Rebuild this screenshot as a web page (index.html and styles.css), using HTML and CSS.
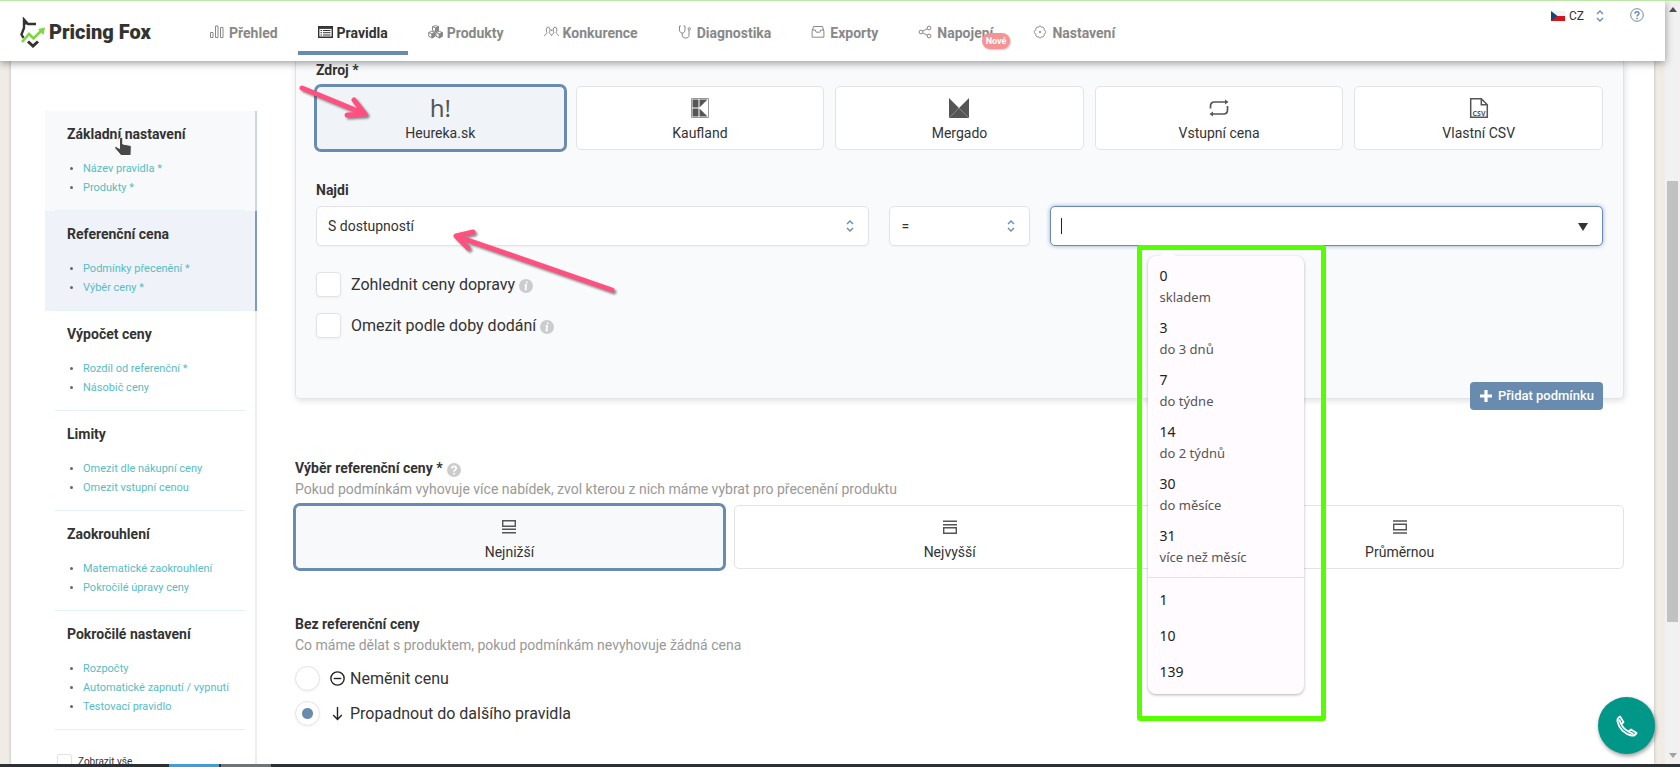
FILE: index.html
```html
<!DOCTYPE html>
<html lang="cs">
<head>
<meta charset="utf-8">
<title>Pricing Fox</title>
<link rel="stylesheet" href="styles.css">
</head>
<body>
<div class="window">
  <div class="app">
    <header class="header">
      <a class="logo" href="#">
        <svg class="logo-mark" viewBox="0 0 26 31" fill="none">
          <path d="M16 7H8L4 2.500V11L1.500 17.500L3.500 21" stroke="#333" stroke-width="2.400"/>
          <path d="M4 2V8L8 7Z" fill="#333"/>
          <path d="M8 24.500L13 29L18 24.500" stroke="#333" stroke-width="3"/>
          <path d="M2 25L9 17L13.500 21.500L22 13" stroke="#7ed63f" stroke-width="2.600"/>
          <path d="M18 12L25 10.500L23.500 18Z" fill="#7ed63f"/>
        </svg>
        <span>Pricing Fox</span>
      </a>
      <nav class="nav">
        <a class="nav-item" href="#"><svg class="nav-icon" viewBox="0 0 15 14"><path d="M.5 7.500h2.500v5H.5zM5.500 1h2.500v11.500H5.500zM10.500 2.500H13v10h-2.500z"/></svg>Přehled</a>
        <a class="nav-item active" href="#"><svg class="nav-icon" viewBox="0 0 15 14"><path d="M.7 1.700h13.600v10.600H.7z" stroke-width="1.400"/><path d="M1 3h13" stroke-width="1.800"/><path d="M2.500 5.500h1.500M5 5.500h7.500M2.500 7.700h1.500M5 7.700h7.500M2.500 10h1.500M5 10h7.500"/></svg>Pravidla</a>
        <a class="nav-item" href="#"><svg class="nav-icon" viewBox="0 0 15 14"><path d="M4.500 1.700L7.500.6l3 1.100v3.600L7.500 6.700l-3-1.400zM4.500 1.700l3 1.300 3-1.300M7.500 3v3.500M.7 7.500l3-1.200 3.300 1.200v3.700L4 12.900l-3.300-1.700zM.7 7.500L4 9l3-1.500M4 9v4M8 7.500l3.300-1.200 3 1.200v3.700l-3 1.700L8 11.200zM8 7.500L11.300 9l3-1.500M11.300 9v4"/><path d="M4 9l3-1.500v3.700L4 13zM11.300 9l3-1.500v3.700l-3 1.800zM7.500 3l3-1.300v3.600l-3 1.400z" fill="currentColor"/></svg>Produkty</a>
        <a class="nav-item" href="#"><svg class="nav-icon" viewBox="0 0 15 14"><path d="M.6 11C.8 9 3 9 3 7.500 2 6.500 1.900 2 4.200 2S6.300 6.500 5.300 7.500c0 1.500 2.300 1.400 2.300 3 0-1.600 2.300-1.500 2.300-3-1-1-1.100-5.500 1.100-5.500s2.200 4.500 1.200 5.500c0 1.500 2.200 1.500 2.300 3.500M7 4.500l.6 1.500.6-1.500"/></svg>Konkurence</a>
        <a class="nav-item" href="#"><svg class="nav-icon narrow" viewBox="0 0 13 14"><path d="M2.500 1H1v4c0 4 5.500 4 5.500 0V1H5M3.700 8v2c0 4 6.800 4 6.800.5V5"/><circle cx="10.800" cy="3.800" r="1.200"/></svg>Diagnostika</a>
        <a class="nav-item" href="#"><svg class="nav-icon narrow" viewBox="0 0 13 14"><path d="M.6 6.500L2 1.500h9l1.400 5v5.700H.6zM.6 5h3.200l.9 2.200h3.600L9.200 5h3.200"/></svg>Exporty</a>
        <a class="nav-item" href="#"><svg class="nav-icon narrow" viewBox="0 0 13 14"><circle cx="2.500" cy="7" r="1.900"/><circle cx="10.500" cy="3" r="1.900"/><circle cx="10.500" cy="11" r="1.900"/><path d="M4.200 6.100l4.600-2.300M4.200 7.900l4.600 2.300"/></svg>Napojení<span class="badge">Nové</span></a>
        <a class="nav-item" href="#"><svg class="nav-icon narrow" viewBox="0 0 13 14"><path d="M5 2.300C5.500.4 7.500.4 8 2.300c1.800-.8 3.300.7 2.500 2.500 2.300 1 2.300 3.400 0 4.400.8 1.800-.7 3.300-2.500 2.500-.5 1.900-2.500 1.900-3 0-1.800.8-3.300-.7-2.500-2.500C.2 8.200.2 5.800 2.500 4.800 1.700 3 3.200 1.500 5 2.300z"/><circle cx="6.500" cy="7" r="1.100" fill="currentColor" stroke="none"/></svg>Nastavení</a>
      </nav>
      <div class="tools">
        <div class="lang">
          <svg class="flag" viewBox="0 0 14 10"><path fill="#f3f3f3" d="M0 0h14v5H0z"/><path fill="#d7141a" d="M0 5h14v5H0z"/><path fill="#11457e" d="M0 0l6.500 5L0 10z"/></svg>
          <select class="lang-select" aria-label="Jazyk"><option>CZ</option></select>
          <svg class="updown" viewBox="0 0 8 12"><path d="M1 4L4 1 7 4M1 8L4 11 7 8"/></svg>
        </div>
        <button class="help" aria-label="Nápověda"><svg viewBox="0 0 14 14"><circle cx="7" cy="7" r="6.300"/><path d="M5 5.700c0-2.600 4-2.500 4-.2C9 7 7 6.900 7 8.500M7 9.700v1.500" stroke-width="1.500"/></svg></button>
      </div>
    </header>

    <div class="stage">
      <div class="sheet">
        <aside class="side">
          <ul class="steps">
            <li class="step seen"><h3>Základní nastavení
              <svg class="pointer" viewBox="0 0 20 21"><path d="M7.500 1.500c1-.7 2.300 0 2.300 1.200V8l7 1.300c1.300.4 1.700 1.300 1.500 2.500L18 19.500H8L2 12.500c-.8-1.300.6-2.300 1.700-1.700l2.800 1.700V2.700c0-.5.500-1 1-1.200z" fill="#484848" stroke="#fff"/></svg></h3>
              <ul class="links"><li><a href="#">Název pravidla *</a></li><li><a href="#">Produkty *</a></li></ul></li>
            <li class="step current"><h3>Referenční cena</h3>
              <ul class="links"><li><a href="#">Podmínky přecenění *</a></li><li><a href="#">Výběr ceny *</a></li></ul></li>
            <li class="step"><h3>Výpočet ceny</h3>
              <ul class="links"><li><a href="#">Rozdíl od referenční *</a></li><li><a href="#">Násobič ceny</a></li></ul></li>
            <li class="step"><h3>Limity</h3>
              <ul class="links"><li><a href="#">Omezit dle nákupní ceny</a></li><li><a href="#">Omezit vstupní cenou</a></li></ul></li>
            <li class="step"><h3>Zaokrouhlení</h3>
              <ul class="links"><li><a href="#">Matematické zaokrouhlení</a></li><li><a href="#">Pokročilé úpravy ceny</a></li></ul></li>
            <li class="step"><h3>Pokročilé nastavení</h3>
              <ul class="links"><li><a href="#">Rozpočty</a></li><li><a href="#">Automatické zapnutí / vypnutí</a></li><li><a href="#">Testovací pravidlo</a></li></ul></li>
          </ul>
          <label class="show-all"><input type="checkbox" class="check small">Zobrazit vše</label>
        </aside>

        <main class="main">
          <section class="panel">
            <h4 class="label">Zdroj *</h4>
            <div class="sources">
              <button class="card selected"><span class="glyph">h!</span>Heureka.sk</button>
              <button class="card"><svg class="card-icon" viewBox="0 0 20 20"><path d="M1.500.5h17v19h-17z" fill="#fff" stroke="#999"/><path d="M2.500 1.500h6v8h-6zM2.500 10.500h6v8h-6zM9.500 1.500h8l-8 8zM9.500 10.500l8 8h-8z" fill="#555"/></svg>Kaufland</button>
              <button class="card"><svg class="card-icon" viewBox="0 0 20 20"><path d="M0 0l10 10L20 0v20H0z" fill="#555"/><path d="M10 10L0 20M10 10l10 10" stroke="#999" stroke-width=".7"/></svg>Mergado</button>
              <button class="card"><svg class="card-icon" viewBox="0 0 20 20" fill="none" stroke="#555" stroke-width="1.700"><path d="M1.500 10.500V8c0-2.500 1.500-4 4-4H17M18.500 8v4c0 2.500-1.500 4-4 4H3"/><path d="M16 1.500L19.500 4 16 6.500zM4 13.500L.5 16 4 18.500z" fill="#555" stroke="none"/></svg>Vstupní cena</button>
              <button class="card"><svg class="card-icon" viewBox="0 0 20 20"><path d="M1.700.7h10.600l6 6v12.600H1.700zM12.300.7v6h6" fill="none" stroke="#555" stroke-width="1.500"/><text x="10" y="17.500" text-anchor="middle" class="csv">CSV</text></svg>Vlastní CSV</button>
            </div>
            <h4 class="label find">Najdi</h4>
            <div class="filters">
              <div class="field"><select class="control" aria-label="Najdi"><option>S dostupností</option></select><svg class="updown" viewBox="0 0 8 12"><path d="M1 4L4 1 7 4M1 8L4 11 7 8"/></svg></div>
              <div class="field"><select class="control" aria-label="Operátor"><option>=</option></select><svg class="updown" viewBox="0 0 8 12"><path d="M1 4L4 1 7 4M1 8L4 11 7 8"/></svg></div>
              <div class="field focus">
                <input class="control" type="text" aria-label="Hodnota"><span class="caret"></span>
                <svg class="arrow" viewBox="0 0 10 8"><path d="M0 0h10L5 8z" fill="#333"/></svg>
                <div class="frame">
                  <div class="menu">
                    <ul>
                      <li>0<small>skladem</small></li>
                      <li>3<small>do 3 dnů</small></li>
                      <li>7<small>do týdne</small></li>
                      <li>14<small>do 2 týdnů</small></li>
                      <li>30<small>do měsíce</small></li>
                      <li>31<small>více než měsíc</small></li>
                    </ul>
                    <ul class="plain"><li>1</li><li>10</li><li>139</li></ul>
                  </div>
                </div>
              </div>
            </div>
            <div class="options">
              <label class="option"><input type="checkbox" class="check">Zohlednit ceny dopravy<svg class="hint" viewBox="0 0 14 14"><circle cx="7" cy="7" r="7" fill="#ccc"/><path d="M7.700 2.500v1.800M5.500 6h1.700l-.8 4.500h1.400" stroke="#fff" stroke-width="1.600" fill="none"/></svg></label>
              <label class="option"><input type="checkbox" class="check">Omezit podle doby dodání<svg class="hint" viewBox="0 0 14 14"><circle cx="7" cy="7" r="7" fill="#ccc"/><path d="M7.700 2.500v1.800M5.500 6h1.700l-.8 4.500h1.400" stroke="#fff" stroke-width="1.600" fill="none"/></svg></label>
            </div>
            <button class="add"><svg viewBox="0 0 12 12"><path d="M6 0v12M0 6h12" stroke="#fff" stroke-width="3.200"/></svg>Přidat podmínku</button>
            <svg class="marks" viewBox="0 0 340 230">
              <g><path d="M8 27L71 53M60 39L71 53L53 54"/><path d="M318 229L162 175M179 171L162 175L174 187"/></g>
            </svg>
          </section>

          <section class="block">
            <h4 class="label">Výběr referenční ceny *<svg class="hint" viewBox="0 0 14 14"><circle cx="7" cy="7" r="7" fill="#ccc"/><path d="M4.800 5.500c0-3 4.400-2.800 4.400-.2C9.200 7 7 6.900 7 8.700M7 9.800v1.700" stroke="#fff" stroke-width="1.700" fill="none"/></svg></h4>
            <p class="note">Pokud podmínkám vyhovuje více nabídek, zvol kterou z nich máme vybrat pro přecenění produktu</p>
            <div class="picks">
              <button class="card selected"><svg class="pick-icon" viewBox="0 0 14 14"><path d="M.7.700h12.600v5.600H.7zM0 9.300h14M0 12.700h14"/></svg>Nejnižší</button>
              <button class="card"><svg class="pick-icon" viewBox="0 0 14 14"><path d="M.7 7.700h12.600v5.600H.7zM0 1.300h14M0 4.700h14"/></svg>Nejvyšší</button>
              <button class="card"><svg class="pick-icon" viewBox="0 0 14 14"><path d="M.7 4.200h12.600v5.600H.7zM0 1h14M0 13h14"/></svg>Průměrnou</button>
            </div>
          </section>

          <section class="block fallback">
            <h4 class="label">Bez referenční ceny</h4>
            <p class="note">Co máme dělat s produktem, pokud podmínkám nevyhovuje žádná cena</p>
            <label class="choice"><input type="radio" name="fallback" class="radio"><svg class="choice-icon" viewBox="0 0 14 14"><circle cx="7" cy="7" r="6.200"/><path d="M3.500 7h7"/></svg>Neměnit cenu</label>
            <label class="choice"><input type="radio" name="fallback" class="radio" checked><svg class="choice-icon" viewBox="0 0 14 14"><path d="M7 1v11.500M3 8.500l4 4 4-4"/></svg>Propadnout do dalšího pravidla</label>
          </section>
        </main>
      </div>
      <button class="call" aria-label="Zavolat"><svg viewBox="0 0 22 22"><path d="M4 1.500l3.500 5.500-2.200 2.200c1.500 3.300 4.200 6 7.500 7.500l2.200-2.200 5.500 3.500c-1 2-2.700 3-5 2.500C8.500 19 3 13.500 1.500 6.500 1 4.200 2 2.500 4 1.500zM3 4.500l2.300 4.700M12.800 16.700l4.700 2.300"/></svg></button>
    </div>
  </div>
  <div class="scrollbar">
    <svg viewBox="0 0 8 5"><path d="M0 5h8L4 0z" fill="#505050"/></svg>
    <div class="track"><div class="thumb"></div></div>
    <svg viewBox="0 0 8 5"><path d="M0 0h8L4 5z" fill="#a3a3a3"/></svg>
  </div>
</div>
<div class="taskbar"><span class="task blue"></span><span class="task grey"></span></div>
</body>
</html>
```

FILE: styles.css
```css
* { box-sizing: border-box; }
body {
  margin: 0;
  height: 100vh;
  display: flex;
  flex-direction: column;
  overflow: hidden;
  font: 14px/20px Roboto, sans-serif;
  color: #333;
  background: #f0ece5;
  border-top: 1px solid #b9e8a4;
}
ul { list-style: none; margin: 0; padding: 0; }
h3, h4, p { margin: 0; }
button, input, select { font: inherit; color: inherit; margin: 0; }
a { text-decoration: none; }
svg { display: block; flex: none; }

.window { flex: 1; min-height: 0; display: flex; }
.app { flex: 1; min-width: 0; display: flex; flex-direction: column; }

.header {
  position: relative;
  z-index: 5;
  display: flex;
  height: 60px;
  padding: 0 20px;
  background: #fff;
  box-shadow: 0 2px 8px rgba(0, 0, 0, .4);
}
.logo {
  display: flex;
  align-items: center;
  gap: 3px;
  width: 170px;
  padding-top: 2px;
  color: #333;
  font-size: 20px;
  font-weight: 900;
}
.logo-mark { width: 26px; height: 31px; }
.nav { display: flex; }
.nav-item {
  position: relative;
  display: flex;
  align-items: center;
  gap: 4px;
  height: 54px;
  padding: 13px 20px 0;
  color: #888;
  font-weight: 700;
  border-bottom: 4px solid transparent;
}
.nav-item.active { color: #333; border-color: #6a8bb0; }
.nav-icon { width: 15px; height: 14px; margin-bottom: 2px; fill: none; stroke: currentColor; }
.nav-icon.narrow { width: 14px; margin-right: 1px; }
.badge {
  position: absolute;
  right: 3px;
  top: 32px;
  padding: 0 4px;
  border-radius: 8px;
  background: #f59494;
  color: #fff;
  font-size: 9px;
  line-height: 16px;
  box-shadow: 1px 1px 2px rgba(0, 0, 0, .2);
}
.tools { display: flex; align-items: flex-start; gap: 26px; margin-left: auto; padding: 7px 1px 0 0; }
.lang { display: flex; align-items: center; gap: 4px; height: 16px; }
.flag { width: 14px; height: 10px; }
.lang-select { appearance: none; border: 0; background: none; padding: 0; width: 23px; font-size: 12px; }
.updown { width: 8px; height: 12px; fill: none; stroke: #6a8bb0; stroke-width: 1.4; }
.help { padding: 0; border: 0; background: none; }
.help svg { width: 14px; height: 14px; fill: none; stroke: #6a8bb0; }

.stage { position: relative; flex: 1; min-height: 0; padding: 0 11px; overflow: hidden; }
.sheet {
  display: flex;
  height: 100%;
  padding: 0 30px 0 34px;
  background: #fff;
  box-shadow: 0 0 3px rgba(0, 0, 50, .25);
}

.side { display: flex; flex-direction: column; width: 212px; padding-top: 50px; flex: none; }
.step {
  position: relative;
  padding: 13px 22px 14px;
  border-right: 2px solid #eee;
}
.step::after {
  content: "";
  position: absolute;
  left: 10px;
  right: 10px;
  bottom: 0;
  height: 1px;
  background: #e3f3f2;
}
.step.seen { background: #f8f9fb; border-color: #ccd7e4; }
.step.current { background: #eff2f8; border-color: #7f9bbd; }
.step h3 { position: relative; font-size: 14px; line-height: 20px; }
.links { padding: 15px 0 0 16px; list-style: disc; color: #666; font-size: 11px; line-height: 19px; }
.links li::marker { font-size: 10px; }
.links a { color: #56bdc3; white-space: nowrap; }
.pointer { position: absolute; left: 46px; top: 12px; width: 20px; height: 21px; }
.show-all {
  display: flex;
  flex: 1;
  align-items: flex-start;
  gap: 6px;
  padding: 24px 0 0 12px;
  border-right: 2px solid #eee;
  font-size: 10px;
  line-height: 16px;
}

.main { flex: 1; min-width: 0; margin-left: 38px; }
.panel {
  position: relative;
  height: 338px;
  padding: 0 20px;
  background: #f9fafc;
  border: 1px solid #e2e3e5;
  border-top: 0;
  border-radius: 0 0 5px 5px;
  box-shadow: 1px 2px 6px rgba(0, 0, 0, .12);
}
.label { display: flex; align-items: center; gap: 4px; font-size: 14px; line-height: 18px; }
.sources { display: grid; grid-template-columns: repeat(5, 1fr); gap: 11px; margin-top: 7px; }
.card {
  display: flex;
  flex-direction: column;
  align-items: center;
  justify-content: center;
  gap: 5px;
  height: 64px;
  padding: 5px 0 0;
  border: 1px solid #e2e3e5;
  border-radius: 5px;
  background: #fff;
}
.card.selected { background: #f8f9fb; border-color: #6a8bb0; box-shadow: 0 0 0 2px #6a8bb0; }
.sources .card.selected { background: #f0f4f9; }
.card-icon { width: 20px; height: 20px; }
.glyph { color: #555; font: 24px/20px "Noto Sans", sans-serif; }
.csv { font: bold 7px "Open Sans", sans-serif; fill: #555; }
.label.find { margin-top: 31px; }
.filters { display: grid; grid-template-columns: 553fr 140fr 553fr; gap: 20px; margin-top: 7px; }
.field { position: relative; display: flex; }
.control {
  appearance: none;
  width: 100%;
  height: 40px;
  padding: 0 11px;
  border: 1px solid #e2e3e5;
  border-radius: 5px;
  background: #fff;
  outline: 0;
  box-shadow: 0 1px 2px rgba(0, 0, 0, .04);
}
.field .updown { position: absolute; right: 15px; top: 14px; }
.field .arrow { position: absolute; right: 15px; top: 17px; width: 10px; height: 8px; }
.focus .control { border-color: #6a8bb0; box-shadow: 0 0 4px rgba(106, 139, 176, .7); }
.caret { position: absolute; left: 11px; top: 12px; width: 1px; height: 16px; background: #222; }
.frame {
  position: absolute;
  z-index: 3;
  left: 87px;
  top: 39px;
  width: 189px;
  padding: 6px 17px 22px 6px;
  border: 5px solid #5f0;
  border-radius: 3px;
}
.menu {
  position: relative;
  width: 156px;
  padding-top: 9px;
  background: #fffbff;
  border-radius: 8px;
  box-shadow: 0 1px 3px rgba(0, 0, 0, .3);
  font-family: "Noto Sans", sans-serif;
}
.menu::before {
  content: "";
  position: absolute;
  left: 12px;
  top: -6px;
  border: solid transparent;
  border-width: 0 8px 6px;
  border-bottom-color: #fffbff;
}
.menu li { height: 52px; padding: 0 12px; line-height: 22px; color: #222; }
.menu small { display: block; font-size: 13px; line-height: 20px; color: #555; }
.menu .plain { padding: 4px 0; border-top: 1px solid #f2d6fb; }
.menu .plain li { height: 36px; line-height: 36px; }
.options { display: flex; flex-direction: column; gap: 16px; margin-top: 26px; }
.option, .choice { display: flex; align-items: center; height: 25px; font-size: 16px; }
.check, .radio {
  appearance: none;
  flex: none;
  width: 25px;
  height: 25px;
  margin-right: 10px;
  border: 1px solid #e2e3e5;
  border-radius: 4px;
  background: #fff;
  box-shadow: 0 1px 3px rgba(0, 0, 0, .05);
}
.check.small { width: 15px; height: 15px; margin-right: 0; border-radius: 2px; }
.radio { border-radius: 50%; }
.radio:checked { background: radial-gradient(circle, #6a8bb0 5px, #fff 6px); }
.hint { width: 14px; height: 14px; margin: 3px 0 0 4px; }
.label .hint { margin-left: 0; }
.add {
  position: absolute;
  right: 20px;
  bottom: -12px;
  display: flex;
  align-items: center;
  gap: 6px;
  height: 28px;
  padding: 0 9px 0 10px;
  border: 0;
  border-radius: 4px;
  background: #6a8bb0;
  color: #fff;
  font-size: 13px;
  font-weight: 500;
}
.add svg { width: 12px; height: 12px; }
.marks { position: absolute; z-index: 4; left: -2px; top: 0; width: 340px; height: 230px; pointer-events: none; overflow: visible; }
.marks g { fill: none; stroke: #ff507f; stroke-width: 5; stroke-linecap: round; stroke-linejoin: round; filter: drop-shadow(2px 2px 1px rgba(0, 0, 0, .45)); }

.block { padding-top: 60px; }
.note { margin-top: 1px; color: #999; line-height: 22px; }
.picks { display: flex; gap: 10px; margin-top: 5px; }
.picks .card { flex: 1 1 auto; gap: 8px; padding-top: 8px; }
.pick-icon { width: 14px; height: 14px; fill: none; stroke: #555; stroke-width: 1.4; }
.fallback { padding-top: 46px; }
.choice { margin-top: 10px; }
.choice-icon { width: 15px; height: 15px; margin-right: 5px; fill: none; stroke: #222; stroke-width: 1.3; }

.call {
  position: absolute;
  right: 10px;
  bottom: 10px;
  display: flex;
  align-items: center;
  justify-content: center;
  width: 57px;
  height: 57px;
  padding: 0;
  border: 0;
  border-radius: 50%;
  background: #009688;
  box-shadow: 1px 2px 4px rgba(0, 0, 0, .4);
}
.call svg { width: 22px; height: 22px; fill: none; stroke: #fff; stroke-width: 1.8; stroke-linejoin: round; }

.scrollbar { display: flex; flex-direction: column; align-items: center; width: 15px; padding: 6px 0; background: #f1f1f1; }
.scrollbar svg { width: 8px; height: 5px; }
.track { flex: 1; width: 11px; padding: 169px 0 131px; }
.thumb { height: 100%; background: #c1c1c1; }
.taskbar { display: flex; gap: 2px; height: 3px; padding-left: 169px; background: #2b3035; }
.task { width: 50px; }
.blue { background: #3b9fd8; }
.grey { background: #707376; }
```
